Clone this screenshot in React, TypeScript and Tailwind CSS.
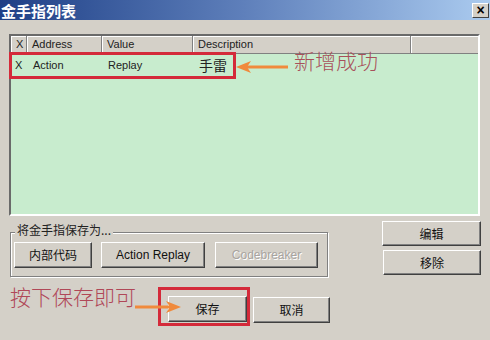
import React from "react";

const ui = "font-['Liberation_Sans','Noto_Sans_CJK_SC',sans-serif]";
const cjk = "font-['Noto_Sans_CJK_SC',sans-serif]";

function Btn({
  children,
  className = "",
  disabled = false,
}: {
  children: React.ReactNode;
  className?: string;
  disabled?: boolean;
}) {
  return (
    <div
      className={
        "flex items-center justify-center bg-[#d4d0c8] border border-t-white border-l-white border-r-[#404040] border-b-[#404040] shadow-[inset_-1px_-1px_#808080] text-[12px] " +
        (disabled ? "text-[#a8a4a0] [text-shadow:1px_1px_#ffffff] " : "text-[#111] ") +
        className
      }
    >
      {children}
    </div>
  );
}

function HeaderCell({ label, className = "" }: { label?: string; className?: string }) {
  return (
    <div
      className={
        "h-full flex items-center pl-[5px] text-[11px] text-[#222] border-r border-r-[#808080] shadow-[inset_1px_1px_#ffffff] " +
        className
      }
    >
      {label}
    </div>
  );
}

function Arrow({ width }: { width: number }) {
  return (
    <svg width={width} height="14" viewBox={`0 0 ${width} 14`}>
      <line x1="10" y1="7" x2={width} y2="7" stroke="#f08a3c" strokeWidth="3" />
      <polygon points="0,7 15,1 11,7 15,13" fill="#f08a3c" />
    </svg>
  );
}

export default function App() {
  return (
    <div className={"w-[490px] h-[340px] bg-[#d4d0c8] overflow-hidden " + ui}>
      {/* title bar */}
      <div className="h-[20px] flex items-center justify-between bg-gradient-to-r from-[#1f3f86] via-[#5f80bb] to-[#abcbef] pl-[1px] pr-[1px]">
        <span className={"text-white font-bold text-[15px] leading-none " + cjk}>
          金手指列表
        </span>
        <div className="w-[17px] h-[15px] flex items-center justify-center bg-[#d4d0c8] border border-t-white border-l-white border-r-[#404040] border-b-[#404040] text-[14px] font-bold leading-none">
          ×
        </div>
      </div>

      {/* list view */}
      <div className="relative ml-[9px] mt-[14px] w-[471px] h-[182px] border-2 border-t-[#6a6a6a] border-l-[#6a6a6a] border-r-white border-b-white bg-[#c8ecce]">
        <div className="h-[18px] flex bg-[#d4d0c8] border-b border-b-[#808080]">
          <HeaderCell label="X" className="w-[16px] pl-[3px]" />
          <HeaderCell label="Address" className="w-[75px]" />
          <HeaderCell label="Value" className="w-[91px]" />
          <HeaderCell label="Description" className="w-[218px]" />
          <HeaderCell className="flex-1 border-r-0" />
        </div>
        <div className="h-[22px] flex items-center text-[11px] text-[#222]">
          <span className="w-[16px] pl-[4px]">X</span>
          <span className="w-[75px] pl-[6px]">Action</span>
          <span className="w-[91px] pl-[6px]">Replay</span>
          <span className={"pl-[6px] text-[14px] " + cjk}>手雷</span>
        </div>

        {/* annotation: row highlight */}
        <div className="absolute left-[-2px] top-[16px] w-[227px] h-[27px] border-[3px] border-[#d42a3a]" />
        <div className="absolute left-[225px] top-[24px]">
          <Arrow width={52} />
        </div>
        <div className={"absolute left-[283px] top-[14px] text-[21px] font-light leading-none text-[#a8505a] " + cjk}>
          新增成功
        </div>
      </div>

      <div className="flex">
        {/* left column */}
        <div className="ml-[10px] w-[320px]">
          <div className="relative mt-[16px] w-[318px] h-[45px] border border-[#808080] shadow-[inset_1px_1px_#ffffff,1px_1px_#ffffff]">
            <span className={"absolute left-[4px] top-[-9px] px-[2px] bg-[#d4d0c8] text-[12px] leading-none text-[#222] " + cjk}>
              将金手指保存为...
            </span>
            <div className="flex pt-[9px] pl-[3px] gap-[9px]">
              <Btn className={"w-[78px] h-[26px] " + cjk}>内部代码</Btn>
              <Btn className="w-[104px] h-[26px] text-[11px]">Action Replay</Btn>
              <Btn disabled className="w-[103px] h-[26px] text-[11px] ml-[1px]">
                Codebreaker
              </Btn>
            </div>
          </div>

          <div className="relative flex items-start mt-[10px]">
            <span className={"w-[148px] mt-[-1px] text-[21px] font-light leading-none text-[#b04858] " + cjk}>
              按下保存即可
            </span>
            <div className="border-[3px] border-[#d42a3a] pl-[7px] pt-[6px] pb-[1px] w-[92px]">
              <Btn className={"w-[79px] h-[26px] " + cjk}>保存</Btn>
            </div>
            <Btn className={"w-[77px] h-[26px] ml-[3px] mt-[10px] " + cjk}>取消</Btn>
            <div className="absolute left-[125px] top-[13px] rotate-180">
              <Arrow width={46} />
            </div>
          </div>
        </div>

        {/* right column */}
        <div className="ml-auto mr-[9px] mt-[5px] flex flex-col items-end gap-[4px]">
          <Btn className={"w-[99px] h-[25px] " + cjk}>编辑</Btn>
          <Btn className={"w-[98px] h-[25px] " + cjk}>移除</Btn>
        </div>
      </div>
    </div>
  );
}
